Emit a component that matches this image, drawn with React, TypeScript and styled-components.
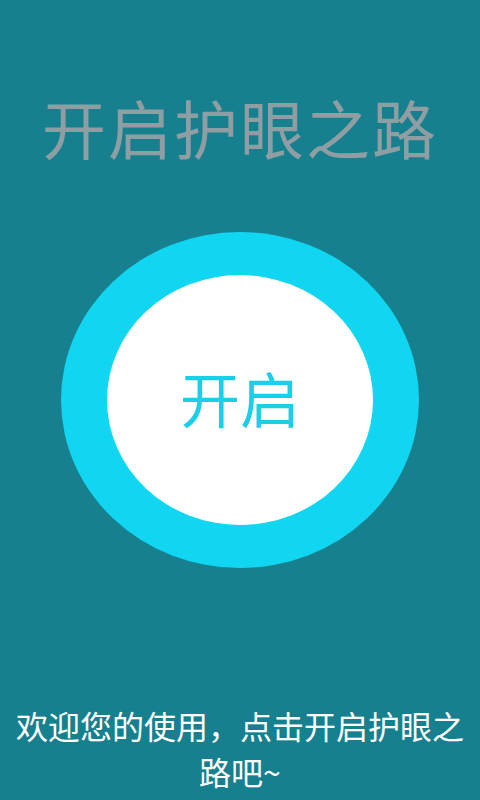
import styled, { createGlobalStyle } from "styled-components";

const GlobalStyle = createGlobalStyle`
  html, body {
    margin: 0;
    padding: 0;
    background: #17808f;
  }
  * {
    box-sizing: border-box;
  }
`;

const Screen = styled.div`
  width: 480px;
  height: 800px;
  background: #17808f;
  display: flex;
  flex-direction: column;
  align-items: center;
  font-family: "Noto Sans CJK SC", "Noto Sans", sans-serif;
  overflow: hidden;
`;

const Title = styled.h1`
  margin: 0;
  padding-top: 88px;
  height: 232px;
  font-size: 64px;
  line-height: 76px;
  font-weight: 400;
  color: #8e9ea3;
  letter-spacing: 2px;
`;

const OuterRing = styled.div`
  width: 358px;
  height: 336px;
  border-radius: 50%;
  background: #10d6f1;
  display: flex;
  align-items: center;
  justify-content: center;
`;

const StartButton = styled.button`
  width: 266px;
  height: 250px;
  border-radius: 50%;
  border: none;
  background: #ffffff;
  color: #1ccfe8;
  font-family: inherit;
  font-size: 60px;
  font-weight: 400;
  line-height: 1;
  padding: 0 0 6px 0;
  cursor: pointer;
`;

const Footer = styled.p`
  margin: auto 0 0;
  padding: 0 8px 6px;
  width: 100%;
  text-align: center;
  color: #ffffff;
  font-size: 32px;
  line-height: 46px;
`;

export default function App() {
  return (
    <>
      <GlobalStyle />
      <Screen>
        <Title>开启护眼之路</Title>
        <OuterRing>
          <StartButton>开启</StartButton>
        </OuterRing>
        <Footer>欢迎您的使用，点击开启护眼之路吧~</Footer>
      </Screen>
    </>
  );
}
